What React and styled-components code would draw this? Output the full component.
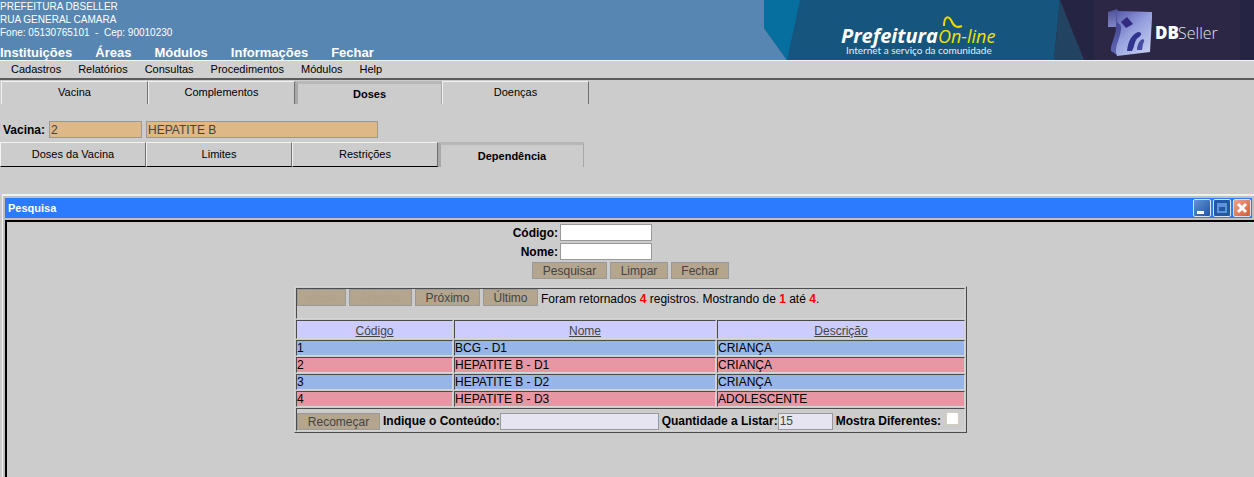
import React, { useState } from "react";
import styled, { createGlobalStyle, css } from "styled-components";

const Global = createGlobalStyle`
  * { box-sizing: border-box; }
  body {
    margin: 0;
    background: #cccccc;
    color: #000;
    font: 12px/14px "Liberation Sans", Arial, sans-serif;
  }
  input, button { font: inherit; color: #444; }
`;

const Page = styled.div`
  display: flex;
  flex-direction: column;
  min-height: 100vh;
`;

const Header = styled.header`
  display: flex;
  justify-content: space-between;
  height: 60px;
  overflow: hidden;
  background: #5786b2;
  color: #fff;
`;

const HeaderInfo = styled.div`
  display: flex;
  flex-direction: column;
  justify-content: space-between;
`;

const Address = styled.address`
  font-style: normal;
  font-size: 10px;
  line-height: 13px;
  white-space: pre;
`;

const MainNav = styled.nav`
  display: flex;
  gap: 23px;
  font-size: 13px;
  font-weight: bold;
  line-height: 15px;
`;

const NavLink = styled.a`
  color: inherit;
  text-decoration: none;
`;

const BannerArt = styled.svg`
  flex: none;
  width: 490px;
  height: 60px;
`;

const MenuBar = styled.nav`
  display: flex;
  gap: 17px;
  height: 20px;
  padding: 0 11px;
  border-top: 1px solid #f4f4f4;
  border-bottom: 2px solid #5c5c5c;
  background: #d0d0d0;
  font-size: 11px;
  line-height: 17px;
`;

const TabStrip = styled.div`
  display: flex;
  padding: ${(p) => (p.$boxed ? "0" : "1px 0 0 1px")};
  font-size: 11px;
`;

const Tab = styled.button`
  width: ${(p) => (p.$boxed ? 146 : 147)}px;
  height: ${(p) => (p.$boxed ? 25 : 23)}px;
  padding: 0 0 2px;
  border: 0 solid;
  border-width: 1px 1px ${(p) => (p.$boxed ? 1 : 0)}px 1px;
  border-color: #f2f2f2 #707070 #000 #f2f2f2;
  background: #cccccc;
  color: #000;
  ${(p) =>
    p.$active &&
    css`
      padding: 0;
      border-width: 3px 1px 0 3px;
      border-color: #b8b8b8 #a8a8a8 #b8b8b8 #a8a8a8;
      font-weight: bold;
    `}
`;

const VaccineRow = styled.div`
  display: flex;
  align-items: center;
  gap: 4px;
  padding: 17px 3px 4px;
`;

const Label = styled.label`
  font-weight: bold;
  white-space: nowrap;
`;

const tones = { tan: "#deb887", white: "#fff", lilac: "#e6e4f1" };

const TextField = styled.input`
  width: ${(p) => p.$width}px;
  height: 17px;
  padding: 0 1px;
  border: 1px solid #999;
  border-radius: 0;
  outline: 0;
  background: ${(p) => tones[p.$tone]};
`;

const Window = styled.section`
  display: flex;
  flex: 1;
  flex-direction: column;
  margin-top: 27px;
  margin-left: 2px;
  border: solid #f0f0f0;
  border-width: 2px 0 0 1px;
  background: #c0c0c0;
`;

const TitleBar = styled.div`
  display: flex;
  align-items: center;
  justify-content: space-between;
  height: 20px;
  margin: 2px;
  padding: 0 1px 0 3px;
  background: #2c7bff;
`;

const Title = styled.h1`
  margin: 0;
  color: #fff;
  font-size: 11px;
`;

const WindowButtons = styled.div`
  display: flex;
  gap: 2px;
`;

const WindowButton = styled.button`
  width: 18px;
  height: 18px;
  padding: 0;
  border: 1px solid #d7e2f4;
  border-radius: 2px;
  background: ${(p) => p.$fill};
  svg { display: block; }
`;

const Body = styled.main`
  flex: 1;
  margin-left: 2px;
  padding: 2px 0 8px;
  border: solid #000;
  border-width: 2px 0 0 2px;
  background: #cccccc;
`;

const SearchForm = styled.form`
  display: grid;
  grid-template-columns: 45px 188px;
  justify-content: center;
  justify-items: start;
  align-items: center;
  gap: 2px;
`;

const SearchLabel = styled(Label)`
  justify-self: end;
`;

const FormActions = styled.div`
  grid-column: 1 / -1;
  justify-self: center;
  display: flex;
  gap: 3px;
`;

const Button = styled.button`
  width: ${(p) => p.$width}px;
  height: 17px;
  padding: 1px 0 0;
  border: 1px solid #999;
  border-radius: 0;
  background: #b4a58f;
  line-height: 14px;
  &:disabled { color: #b1a18a; }
`;

const Results = styled.table`
  width: 673px;
  margin: 7px auto 0;
  border: 1px solid;
  border-color: #d6d6d6 #4c4c4c #4c4c4c #d6d6d6;
  border-spacing: 1px;
  table-layout: fixed;
`;

const Cell = styled.td`
  height: ${(p) => p.$height || 16}px;
  padding: 0;
  border: 1px solid;
  border-color: #4c4c4c #d6d6d6 #d6d6d6 #4c4c4c;
  background: ${(p) => p.$fill || "transparent"};
  vertical-align: ${(p) => p.$align || "middle"};
`;

const HeadCell = styled(Cell)`
  padding-top: 2px;
  font-weight: normal;
  text-align: center;
`;

const SortLink = styled.a`
  color: #444;
`;

const Bar = styled.div`
  display: flex;
  align-items: center;
  gap: 3px;
  white-space: nowrap;
`;

const Summary = styled.span`
  padding-top: 2px;
`;

const FieldGroup = styled.div`
  display: flex;
  align-items: center;
  gap: ${(p) => p.$gap || 0}px;
`;

const Count = styled.b`
  color: #f00;
`;

const Check = styled.input`
  appearance: none;
  width: 13px;
  height: 13px;
  margin: 0 0 5px;
  border: 1px solid #d5cdbf;
  border-radius: 2px;
  background: #fff;
  &:checked { background: #2c7bff; }
`;

const mainLinks = ["Instituições", "Áreas", "Módulos", "Informações", "Fechar"];
const menuLinks = ["Cadastros", "Relatórios", "Consultas", "Procedimentos", "Módulos", "Help"];
const columns = ["Código", "Nome", "Descrição"];
const rows = [
  ["1", "BCG - D1", "CRIANÇA"],
  ["2", "HEPATITE B - D1", "CRIANÇA"],
  ["3", "HEPATITE B - D2", "CRIANÇA"],
  ["4", "HEPATITE B - D3", "ADOLESCENTE"],
];

function Banner() {
  return (
    <BannerArt viewBox="0 0 490 60" role="img" aria-label="Prefeitura On-line, DBSeller">
      <defs>
        <linearGradient id="face" x1="0" y1="0" x2="0.7" y2="1">
          <stop offset="0" stopColor="#5458a8" />
          <stop offset="0.5" stopColor="#949fdd" />
          <stop offset="1" stopColor="#c0caf0" />
        </linearGradient>
        <linearGradient id="flag" x1="0" y1="0" x2="0" y2="1">
          <stop offset="0" stopColor="#4d4f96" />
          <stop offset="1" stopColor="#7f85c6" />
        </linearGradient>
        <linearGradient id="side" x1="0" y1="0" x2="0" y2="1">
          <stop offset="0" stopColor="#3a3986" />
          <stop offset="1" stopColor="#6167b5" />
        </linearGradient>
      </defs>
      <path d="M0 0H490V60H23L0 28Z" fill="#15557e" />
      <path d="M0 0H36L23 60L0 28Z" fill="#076f9f" />
      <path d="M296 0H490V60H290Z" fill="#262443" />
      <path d="M330 0H476V60H330Z" fill="#2d2746" />
      <path d="M296 0L320 60H290Z" fill="#234363" />
      <text x="77" y="43" fill="#fff" fontFamily="Open Sans" fontSize="20" fontWeight="700" fontStyle="italic">Prefeitura</text>
      <text x="174" y="43" fill="#f2e205" fontFamily="Open Sans" fontSize="18" fontStyle="italic">On-line</text>
      <path d="M180 26C180 17 184 15 187 20C190 27 193 28 198 26" fill="none" stroke="#f2d505" strokeWidth="2" />
      <text x="82" y="54" fill="#e8f0f5" fontFamily="Lato" fontSize="10">Internet a serviço da comunidade</text>
      <path d="M344 12L353 9L356 14L354 27L344 27Z" fill="url(#flag)" />
      <path d="M353 10L359 14L359 32L353 55L347 51C346 45 352 36 352 27Z" fill="url(#side)" />
      <path d="M353 11L388 12Q388 14 388 18L386 52L353 56C349 46 358 37 357 26L353 22Z" fill="url(#face)" />
      <path d="M357 22L363 17L369 24L362 28Z" fill="#312a7e" />
      <path d="M363 51C364 42 367 35 374 32C378 32 378 35 375 37C370 40 371 46 368 51Z" fill="#30348c" />
      <path d="M373 50C373 44 376 40 379 39C381 40 380 42 379 44L378 50Z" fill="#454ca2" />
      <text x="391" y="39" fill="#fff" fontFamily="Open Sans" fontSize="17" fontWeight="800">DB</text>
      <text x="414" y="39" fill="#e4e2ee" fontFamily="Open Sans" fontSize="16" fontWeight="300">Seller</text>
    </BannerArt>
  );
}

function Tabs({ labels, initial, boxed }) {
  const [active, setActive] = useState(initial);
  return (
    <TabStrip role="tablist" $boxed={boxed}>
      {labels.map((label) => (
        <Tab
          key={label}
          type="button"
          role="tab"
          aria-selected={label === active}
          $boxed={boxed}
          $active={label === active}
          onClick={() => setActive(label)}
        >
          {label}
        </Tab>
      ))}
    </TabStrip>
  );
}

export default function App() {
  return (
    <Page>
      <Global />
      <Header>
        <HeaderInfo>
          <Address>{"PREFEITURA DBSELLER\nRUA GENERAL CAMARA\nFone: 05130765101  -  Cep: 90010230"}</Address>
          <MainNav>
            {mainLinks.map((t) => <NavLink key={t} href="#">{t}</NavLink>)}
          </MainNav>
        </HeaderInfo>
        <Banner />
      </Header>
      <MenuBar>
        {menuLinks.map((t) => <NavLink key={t} href="#">{t}</NavLink>)}
      </MenuBar>
      <Tabs labels={["Vacina", "Complementos", "Doses", "Doenças"]} initial="Doses" />
      <VaccineRow>
        <Label htmlFor="vacina">Vacina:</Label>
        <TextField id="vacina" $width={93} $tone="tan" defaultValue="2" readOnly />
        <TextField aria-label="Nome da vacina" $width={232} $tone="tan" defaultValue="HEPATITE B" readOnly />
      </VaccineRow>
      <Tabs boxed labels={["Doses da Vacina", "Limites", "Restrições", "Dependência"]} initial="Dependência" />
      <Window>
        <TitleBar>
          <Title>Pesquisa</Title>
          <WindowButtons>
            <WindowButton aria-label="Minimizar" $fill="linear-gradient(135deg, #5f95d0, #2156a5)">
              <svg width="16" height="16"><path d="M3 11H10V14H3Z" fill="#fff" /></svg>
            </WindowButton>
            <WindowButton aria-label="Maximizar" $fill="#2558a4">
              <svg width="16" height="16"><path d="M4 4H12V12H4ZM4 6H12" fill="none" stroke="#5f92dc" strokeWidth="2" /></svg>
            </WindowButton>
            <WindowButton aria-label="Fechar janela" $fill="linear-gradient(135deg, #eda28a, #d65b34)">
              <svg width="16" height="16"><path d="M4 4L12 12M12 4L4 12" stroke="#fff" strokeWidth="3" /></svg>
            </WindowButton>
          </WindowButtons>
        </TitleBar>
        <Body>
          <SearchForm onSubmit={(e) => e.preventDefault()}>
            <SearchLabel htmlFor="codigo">Código:</SearchLabel>
            <TextField id="codigo" $width={92} $tone="white" autoFocus />
            <SearchLabel htmlFor="nome">Nome:</SearchLabel>
            <TextField id="nome" $width={92} $tone="white" />
            <FormActions>
              <Button type="submit" $width={75}>Pesquisar</Button>
              <Button type="reset" $width={58}>Limpar</Button>
              <Button type="button" $width={58}>Fechar</Button>
            </FormActions>
          </SearchForm>
          <Results>
            <colgroup>
              <col width="157" />
              <col width="262" />
              <col />
            </colgroup>
            <thead>
              <tr>
                <Cell colSpan={3} $height={31} $align="top">
                  <Bar>
                    <Button type="button" disabled $width={49}>Início</Button>
                    <Button type="button" disabled $width={63}>Anterior</Button>
                    <Button type="button" $width={65}>Próximo</Button>
                    <Button type="button" $width={55}>Último</Button>
                    <Summary>
                      Foram retornados <Count>4</Count> registros. Mostrando de <Count>1</Count> até <Count>4</Count>.
                    </Summary>
                  </Bar>
                </Cell>
              </tr>
              <tr>
                {columns.map((c) => (
                  <HeadCell as="th" scope="col" key={c} $height={19} $fill="#ccccff">
                    <SortLink href="#">{c}</SortLink>
                  </HeadCell>
                ))}
              </tr>
            </thead>
            <tbody>
              {rows.map((row, i) => (
                <tr key={row[0]}>
                  {row.map((value, j) => (
                    <Cell key={j} $fill={i % 2 ? "#e796a4" : "#97b5e6"}>{value}</Cell>
                  ))}
                </tr>
              ))}
            </tbody>
            <tfoot>
              <tr>
                <Cell colSpan={3} $height={23} $align="bottom">
                  <Bar>
                    <Button type="button" $width={83}>Recomeçar</Button>
                    <FieldGroup>
                      <Label htmlFor="conteudo">Indique o Conteúdo:</Label>
                      <TextField id="conteudo" $width={159} $tone="lilac" />
                    </FieldGroup>
                    <FieldGroup>
                      <Label htmlFor="quantidade">Quantidade a Listar:</Label>
                      <TextField id="quantidade" $width={55} $tone="lilac" defaultValue="15" />
                    </FieldGroup>
                    <FieldGroup $gap={5}>
                      <Label htmlFor="diferentes">Mostra Diferentes:</Label>
                      <Check type="checkbox" id="diferentes" />
                    </FieldGroup>
                  </Bar>
                </Cell>
              </tr>
            </tfoot>
          </Results>
        </Body>
      </Window>
    </Page>
  );
}
